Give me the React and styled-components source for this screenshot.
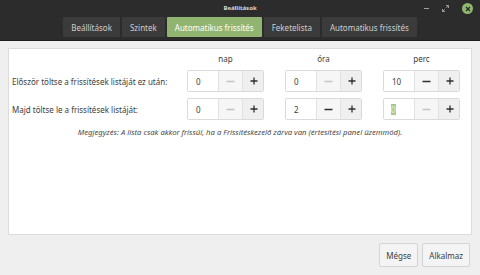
import React from 'react'
import styled, { createGlobalStyle } from 'styled-components'

const GlobalStyle = createGlobalStyle`
    html, body {
        margin: 0;
        padding: 0;
        background: #efefef;
    }
    body {
        font-family: "Noto Sans", "DejaVu Sans", sans-serif;
    }
`

const tabs = ['Beállítások', 'Szintek', 'Automatikus frissítés', 'Feketelista', 'Automatikus frissítés']
const units = ['nap', 'óra', 'perc']
const rows = [
    { label: 'Először töltse a frissítések listáját ez után:', values: [0, 0, 10] },
    { label: 'Majd töltse le a frissítések listáját:', values: [0, 2, 0], focus: 2 },
]

const SpinButton = ({ value, focused }) => (
    <Spin>
        <Entry $focused={focused}>
            {focused ? <Selected>{value}</Selected> : value}
        </Entry>
        <SpinBtn $disabled={value === 0}>
            <svg width="9" height="9" viewBox="0 0 9 9">
                <path d="M0.5 4.5H8.5" stroke="currentColor" strokeWidth="1.3" />
            </svg>
        </SpinBtn>
        <SpinBtn $plus>
            <svg width="8" height="8" viewBox="0 0 8 8">
                <path d="M0.5 4H7.5M4 0.5V7.5" stroke="currentColor" strokeWidth="1.3" />
            </svg>
        </SpinBtn>
    </Spin>
)

const App = () => {
    return (
        <Window>
            <GlobalStyle />
            <Header>
                <TitleRow>
                    <span />
                    <Title>Beállítások</Title>
                    <Controls>
                        <Minimize />
                        <svg width="7" height="7" viewBox="0 0 7 7">
                            <path d="M4 0.5h2.5v2.5M6.5 0.5L4.2 2.8M3 6.5H0.5V4M0.5 6.5L2.8 4.2" stroke="#9a9a9a" strokeWidth="1" fill="none" />
                        </svg>
                        <CloseBtn>
                            <svg width="6" height="6" viewBox="0 0 6 6">
                                <path d="M1 1L5 5M5 1L1 5" stroke="#2d2d2d" strokeWidth="1.4" />
                            </svg>
                        </CloseBtn>
                    </Controls>
                </TitleRow>
                <Tabs>
                    {tabs.map((t, i) => (
                        <Tab key={i} $active={i === 2}>{t}</Tab>
                    ))}
                </Tabs>
            </Header>

            <Body>
                <Panel>
                    <Grid>
                        <span />
                        {units.map(u => <Unit key={u}>{u}</Unit>)}
                        {rows.map((r, ri) => (
                            <React.Fragment key={ri}>
                                <Label>{r.label}</Label>
                                {r.values.map((v, vi) => (
                                    <SpinButton key={vi} value={v} focused={r.focus === vi} />
                                ))}
                            </React.Fragment>
                        ))}
                    </Grid>
                    <Note>Megjegyzés: A lista csak akkor frissül, ha a Frissítéskezelő zárva van (értesítési panel üzemmód).</Note>
                </Panel>
                <Actions>
                    <Button>Mégse</Button>
                    <Button>Alkalmaz</Button>
                </Actions>
            </Body>
        </Window>
    )
}

const Window = styled.div`
    width: 480px;
    height: 275px;
    display: flex;
    flex-direction: column;
    background: #efefef;
    overflow: hidden;
`

const Header = styled.header`
    height: 41px;
    background: #2c2c2c;
    border-bottom: 1px solid #1e1e1e;
    box-sizing: border-box;
    display: flex;
    flex-direction: column;
`

const TitleRow = styled.div`
    height: 15px;
    display: grid;
    grid-template-columns: 1fr auto 1fr;
    align-items: center;
`

const Title = styled.div`
    color: #d8d8d8;
    font-size: 6px;
    font-weight: bold;
    padding-top: 1px;
`

const Controls = styled.div`
    justify-self: end;
    display: flex;
    align-items: center;
    gap: 13px;
    padding-right: 7px;
    padding-top: 2px;
`

const Minimize = styled.div`
    width: 5px;
    height: 1px;
    background: #a0a0a0;
`

const CloseBtn = styled.div`
    width: 11px;
    height: 11px;
    border-radius: 50%;
    background: #8fb86d;
    display: flex;
    align-items: center;
    justify-content: center;
`

const Tabs = styled.nav`
    display: flex;
    justify-content: center;
    gap: 2px;
    padding-top: 2px;
`

const Tab = styled.div`
    height: 20px;
    padding: 0 8px;
    display: flex;
    align-items: center;
    font-size: 8px;
    color: ${p => p.$active ? '#ffffff' : '#cfcfcf'};
    background: ${p => p.$active ? '#92b471' : '#3b3b3b'};
    border-radius: 1px;
`

const Body = styled.main`
    flex: 1;
    display: flex;
    flex-direction: column;
    padding: 7px 8px 8px;
    gap: 8px;
`

const Panel = styled.section`
    flex: 1;
    background: #ffffff;
    border: 1px solid #dcdcdc;
    display: flex;
    flex-direction: column;
`

const Grid = styled.div`
    display: grid;
    grid-template-columns: minmax(0, 1fr) repeat(3, 77px);
    grid-template-rows: 12px 22px 22px;
    column-gap: 21px;
    row-gap: 6px;
    align-items: center;
    padding: 3px 11px 0 3px;
`

const Unit = styled.div`
    text-align: center;
    font-size: 8px;
    color: #3c3c3c;
`

const Label = styled.div`
    white-space: nowrap;
    font-size: 8px;
    color: #3c3c3c;
`

const Spin = styled.div`
    display: grid;
    grid-template-columns: 30px 24px 23px;
    height: 22px;
    box-sizing: border-box;
    border: 1px solid #dadada;
    border-radius: 2px;
    overflow: hidden;
`

const Entry = styled.div`
    background: #fff;
    display: flex;
    align-items: center;
    padding-left: 8px;
    font-size: 8px;
    color: #3c3c3c;
    box-shadow: ${p => p.$focused ? 'inset 0 0 0 1px #a9c78d' : 'none'};
    margin: ${p => p.$focused ? '-1px' : '0'};
`

const Selected = styled.span`
    background: #a9c78d;
    color: #e8f0df;
`

const SpinBtn = styled.div`
    display: flex;
    align-items: center;
    justify-content: center;
    border-left: 1px solid #e2e2e2;
    background: ${p => p.$plus ? '#efefef' : '#f6f6f6'};
    color: ${p => p.$disabled ? '#c4c4c4' : '#2f2f2f'};
`

const Note = styled.p`
    margin: 7px 0 0;
    text-align: center;
    font-size: 7.7px;
    font-style: italic;
    color: #4a4a4a;
`

const Actions = styled.footer`
    display: flex;
    justify-content: flex-end;
    gap: 4px;
    padding-right: 2px;
`

const Button = styled.div`
    height: 22px;
    padding: 0 6px;
    display: flex;
    align-items: center;
    font-size: 8px;
    color: #3c3c3c;
    background: #f4f4f4;
    border: 1px solid #d4d4d4;
    border-radius: 2px;
`

export default App
